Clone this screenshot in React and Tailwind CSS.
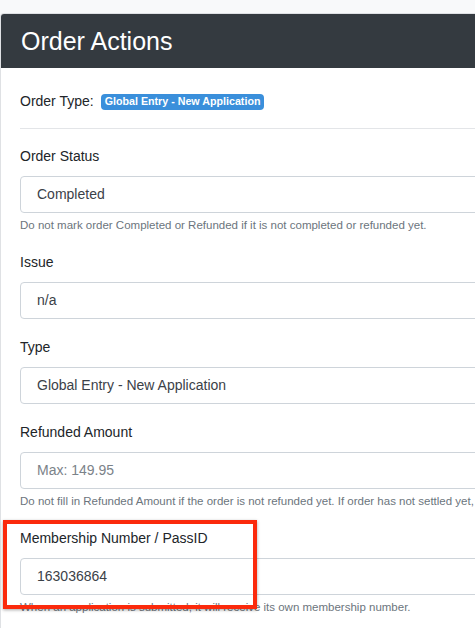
import React from "react";

function Label({ children }) {
  return (
    <div className="text-[14px] leading-[21px] text-[#212529] mb-[9px]">{children}</div>
  );
}

function Field({ value, placeholder }) {
  return (
    <div className="h-[37px] w-full border border-[#ced4da] rounded-[4px] bg-white flex items-center pl-[16px] text-[14px]">
      {placeholder ? (
        <span className="text-[#7b8289]">{placeholder}</span>
      ) : (
        <span className="text-[#3b4148]">{value}</span>
      )}
    </div>
  );
}

function Help({ children }) {
  return (
    <div className="mt-[4px] text-[11.5px] leading-[17px] text-[#6c757d] whitespace-nowrap">{children}</div>
  );
}

function Group({ label, value, placeholder, help }) {
  return (
    <div className="mb-[18px]">
      <Label>{label}</Label>
      <Field value={value} placeholder={placeholder} />
      {help && <Help>{help}</Help>}
    </div>
  );
}

export default function App() {
  return (
    <div
      className="relative w-[475px] h-[628px] overflow-hidden bg-[#f8f9fa]"
      style={{ fontFamily: '"Liberation Sans", Arial, sans-serif' }}
    >
      <div className="mt-[13px] w-[560px] bg-white border-t border-l border-[#dfe1e4] rounded-tl-[4px] overflow-hidden">
        <div className="h-[54px] bg-[#343a40] flex items-center px-[20px]">
          <span className="text-white text-[25px] leading-none">Order Actions</span>
        </div>
        <div className="pl-[19px] pr-[20px] pt-[23px] pb-[20px]">
          <div className="h-[21px] flex items-center text-[14px] text-[#212529]">
            <span>Order Type:</span>
            <span className="ml-[7px] h-[16px] flex items-center px-[4px] rounded-[4px] bg-[#3a8fdb] text-white font-bold text-[10.7px] leading-none">
              Global Entry - New Application
            </span>
          </div>
          <div className="mt-[16px] mb-[17px] border-t border-[#e3e5e8]" />
          <Group
            label="Order Status"
            value="Completed"
            help="Do not mark order Completed or Refunded if it is not completed or refunded yet."
          />
          <Group label="Issue" value="n/a" />
          <Group label="Type" value="Global Entry - New Application" />
          <Group
            label="Refunded Amount"
            placeholder="Max: 149.95"
            help="Do not fill in Refunded Amount if the order is not refunded yet. If order has not settled yet,"
          />
          <Group
            label="Membership Number / PassID"
            value="163036864"
            help="When an application is submitted, it will receive its own membership number."
          />
        </div>
      </div>
      <div className="absolute left-[3px] top-[520px] w-[254px] h-[89px] border-[4px] border-[#fb2a0c] shadow-[0_1px_3px_rgba(0,0,0,0.35)]" />
    </div>
  );
}
